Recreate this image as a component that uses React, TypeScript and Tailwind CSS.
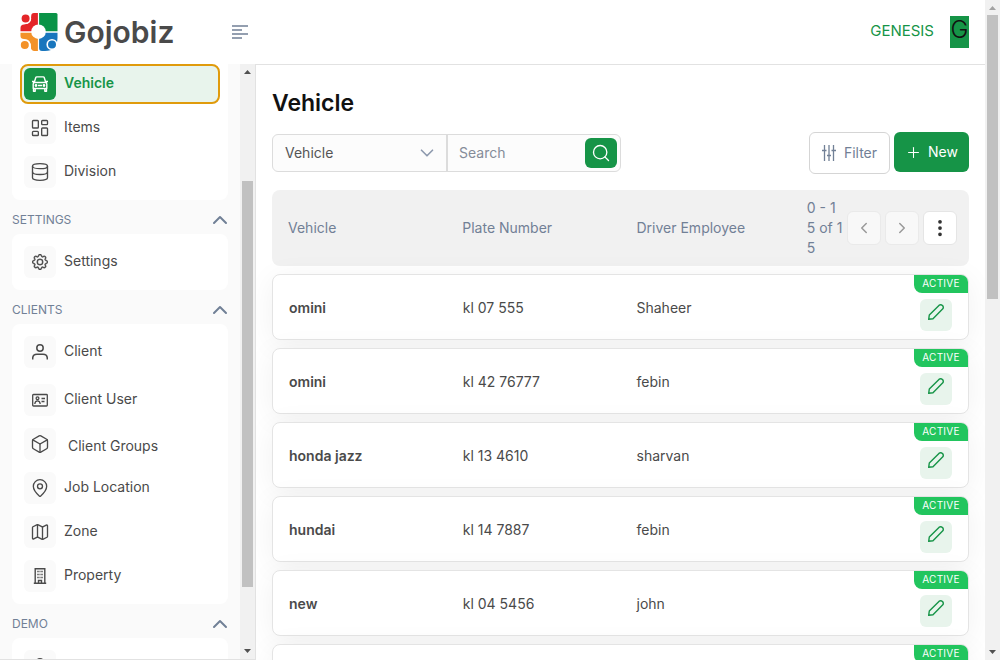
import type { ReactNode } from 'react';
import { Box, ChevronDown, ChevronLeft, ChevronRight, ChevronUp, Database, LayoutDashboard, Map, MapPin, Plus, Search } from 'lucide-react';
import { BsGear, BsThreeDotsVertical } from 'react-icons/bs';

function LogoMark() {
  return (
    <svg viewBox="0 0 38 38" className="size-[38px]" aria-hidden="true">
      <path d="M19 0H36Q37.500 0 37.500 1.500V18.500H19Z" fill="#0a9347" />
      <path d="M.5 18.500V15Q.5 11.500 4 11.500Q11.500 11 11.200 3Q11.200 0 14 0H18V18.500Z" fill="#e42528" />
      <path d="M.5 19.500H18V38H14Q10.500 37 11 34Q11 26 4 26Q.5 26 .5 23Z" fill="#f39229" />
      <path d="M19 19.500H37.500V25Q37 38 25 38H22Q19 38 19 35Z" fill="#1976bd" />
      <g stroke="#fff" strokeWidth="1.600">
        <circle cx="5.600" cy="5.500" r="4.800" fill="#e42528" />
        <circle cx="4.800" cy="32" r="4.800" fill="#f39229" />
        <circle cx="32" cy="31.500" r="4.800" fill="#1976bd" />
      </g>
      <path d="M37.500 26V38H30Q36 36.500 37.500 31" fill="#fff" />
      <path d="M18.500 0V38M0 19H38" stroke="#fff" strokeWidth="1.200" />
      <circle cx="18.500" cy="18.700" r="7.300" fill="#fff" />
    </svg>
  );
}

function CarIcon() {
  return (
    <svg viewBox="0 0 16 16" className="size-4" fill="none" stroke="currentColor" strokeWidth="1.400" strokeLinejoin="round" aria-hidden="true">
      <path d="M2.200 6.500L3.800 1.500Q4 .9 4.800 .9H11.200Q12 .9 12.200 1.500L13.800 6.500M1.200 12.500V8Q1.200 6.500 2.700 6.500H13.300Q14.800 6.500 14.800 8V12.500ZM1.500 12.500V15.300H3.200V12.500M12.800 12.500V15.300H14.500V12.500M0 5.500H2.400M13.600 5.500H16M6 9.500H10" />
      <circle cx="4" cy="9.500" r=".7" fill="currentColor" />
      <circle cx="12" cy="9.500" r=".7" fill="currentColor" />
    </svg>
  );
}

function PersonIcon() {
  return (
    <svg viewBox="0 0 16 16" className="size-4" fill="none" stroke="currentColor" strokeWidth="1.500" aria-hidden="true">
      <circle cx="8" cy="4" r="3.200" />
      <path d="M.7 15.500V14.500Q.7 10.300 5 10.300H11Q15.300 10.300 15.300 14.500V15.500" />
    </svg>
  );
}

function IdCardIcon() {
  return (
    <svg viewBox="0 0 16 16" className="size-4" fill="none" stroke="currentColor" strokeWidth="1.300" aria-hidden="true">
      <rect x=".7" y="2.500" width="14.600" height="11.500" rx=".8" />
      <circle cx="5.500" cy="6.300" r="1.400" />
      <path d="M2.800 12Q3 8.800 5.500 8.800Q8 8.800 8.200 12M9.500 6.500H13M9.500 9.500H12.500" />
    </svg>
  );
}

function BuildingIcon() {
  return (
    <svg viewBox="0 0 16 16" className="size-4" fill="none" stroke="currentColor" aria-hidden="true">
      <path d="M3.200 15.500V.8H12.800V15.500M1.800 15.300H14.200M6.500 15V12.500H9.500V15" strokeWidth="1.400" />
      <path d="M5.300 3.500H6.700M9.300 3.500H10.700M5.300 6.500H6.700M9.300 6.500H10.700M5.300 9.500H6.700M9.300 9.500H10.700M7.500 3.500H8.500M7.500 6.500H8.500M7.500 9.500H8.500" strokeWidth="1.300" />
    </svg>
  );
}

function SlidersIcon() {
  return (
    <svg viewBox="0 0 14 16" className="h-4 w-3.5" fill="none" stroke="currentColor" strokeWidth="1.300" aria-hidden="true">
      <path d="M2.500 0V16M7 0V16M11.500 0V16M0 5.500H4.500M5 10.500H9M9.500 5.500H14" />
    </svg>
  );
}

function PencilIcon() {
  return (
    <svg viewBox="0 0 16 16" className="size-4" fill="none" stroke="currentColor" strokeWidth="1.400" strokeLinejoin="round" aria-hidden="true">
      <path d="M.7 15.300L1.300 11L11.200 1.200Q12.800 .1 14.500 1.500Q15.900 3.200 14.800 4.800L5 14.700Z" />
    </svg>
  );
}

function Scrollbar({ label, children, upTone }: { label: string; children: ReactNode; upTone: string }) {
  return (
    <div aria-label={label} className="flex w-[15px] shrink-0 flex-col items-center bg-[#f1f1f1]">
      <svg viewBox="0 0 15 15" className={`size-[15px] shrink-0 ${upTone}`} fill="currentColor"><path d="M4 10L7.500 6L11 10Z" /></svg>
      <div className="flex min-h-0 w-[11px] flex-1 flex-col">{children}</div>
      <svg viewBox="0 0 15 15" className="size-[15px] shrink-0 text-[#505050]" fill="currentColor"><path d="M4 5L7.500 9L11 5Z" /></svg>
    </div>
  );
}

type Item = { label: string; icon: ReactNode; spacing?: string; text?: string };

const stroke = { size: 20, strokeWidth: 1.6 };

const clients: Item[] = [
  { label: 'Client', icon: <PersonIcon />, spacing: 'mb-1' },
  { label: 'Client User', icon: <IdCardIcon /> },
  { label: 'Client Groups', icon: <Box {...stroke} />, text: 'pl-1 pt-1' },
  { label: 'Job Location', icon: <MapPin {...stroke} /> },
  { label: 'Zone', icon: <Map {...stroke} /> },
  { label: 'Property', icon: <BuildingIcon /> },
];

function NavItem({ label, icon, spacing = '', text = 'pb-0.5' }: Item) {
  return (
    <a href="#" className={`flex items-center gap-2 text-sm text-[#4a4a4a] ${spacing}`}>
      <span className="flex size-8 shrink-0 items-center justify-center rounded-md bg-[#fafafa]">{icon}</span>
      <span className={text}>{label}</span>
    </a>
  );
}

function Section({ title, items }: { title: string; items: Item[] }) {
  return (
    <section>
      <button type="button" className="flex h-[34px] w-full items-center justify-between pt-1.5 text-xs text-[#718096]">
        {title}
        <ChevronUp size={24} strokeWidth={2} className="-mr-1" />
      </button>
      <nav className="flex flex-col gap-3 rounded-lg bg-white p-3">
        {items.map((item, i) => <NavItem key={i} {...item} />)}
      </nav>
    </section>
  );
}

const vehicles = [
  ['omini', 'kl 07 555', 'Shaheer'],
  ['omini', 'kl 42 76777', 'febin'],
  ['honda jazz', 'kl 13 4610', 'sharvan'],
  ['hundai', 'kl 14 7887', 'febin'],
  ['new', 'kl 04 5456', 'john'],
  ['', '', ''],
];

export default function App() {
  return (
    <div className="flex h-screen overflow-hidden bg-white font-['Inter',sans-serif] text-sm text-[#4a4a4a]">
      <div className="flex min-w-0 flex-1 flex-col">
        <header className="flex h-[65px] shrink-0 items-center justify-between border-b border-[#e2e2e2] pr-4 pl-5">
          <div className="flex items-center">
            <a href="#" className="flex items-center gap-1.5 text-3xl font-semibold text-[#4a4a4a]">
              <LogoMark />
              Gojobiz
            </a>
            <button type="button" aria-label="Toggle menu" className="ml-[58px] text-[#718096]">
              <svg viewBox="0 0 16 14" className="h-3.5 w-4" stroke="currentColor" strokeWidth="1.300">
                <path d="M0 1H16M0 5H10M0 9H16M0 13H10" />
              </svg>
            </button>
          </div>
          <div className="flex items-center gap-4">
            <span className="pb-0.5 text-[15px] text-[#169447]">GENESIS</span>
            <button type="button" aria-label="Account" className="flex h-8 w-[19px] justify-center bg-[#169447] text-2xl leading-7 font-light text-[#111]">G</button>
          </div>
        </header>

        <div className="flex min-h-0 flex-1">
          <aside className="-mt-px flex w-64 shrink-0 border-r border-b border-[#e2e2e2] bg-[#fafafa]">
            <div className="min-w-0 flex-1 overflow-hidden px-3">
              <nav className="flex flex-col gap-3 rounded-b-lg bg-white px-3 pb-3">
                <a href="#" aria-current="page" className="-mx-1 -mb-1 flex h-10 shrink-0 items-center gap-2 rounded-lg border-2 border-[#e09b0c] bg-[#e8f4ec] px-0.5 text-sm font-semibold text-[#169447]">
                  <span className="flex size-8 items-center justify-center rounded-md bg-[#169447] text-white"><CarIcon /></span>
                  <span className="pb-0.5">Vehicle</span>
                </a>
                <NavItem label="Items" icon={<LayoutDashboard {...stroke} />} />
                <NavItem label="Division" icon={<Database {...stroke} />} />
              </nav>
              <Section title="SETTINGS" items={[{ label: 'Settings', icon: <BsGear size={16} stroke="currentColor" strokeWidth={0.4} /> }]} />
              <Section title="CLIENTS" items={clients} />
              <Section title="DEMO" items={[{ label: '', icon: <PersonIcon /> }]} />
            </div>
            <Scrollbar label="Sidebar scroll" upTone="text-[#505050]">
              <div className="flex-[102]" />
              <div className="flex-[406] bg-[#c1c1c1]" />
              <div className="flex-[57]" />
            </Scrollbar>
          </aside>

          <main className="min-w-0 flex-1 overflow-hidden px-4 pt-[22px]">
            <h1 className="text-[23px] leading-8 font-semibold text-[#111]">Vehicle</h1>
            <div className="mt-[13px] flex items-start justify-between">
              <form className="mt-0.5 flex h-[38px] w-[349px] rounded-md border border-[#dcdcdc] bg-[#fcfcfc]">
                <div className="relative w-[175px] border-r-2 border-[#dcdcdc]">
                  <select aria-label="Search by" className="h-full w-full appearance-none bg-transparent px-3 text-[#555] outline-none">
                    <option>Vehicle</option>
                  </select>
                  <ChevronDown size={22} strokeWidth={1.8} className="pointer-events-none absolute top-[7px] right-2 text-[#8d99ae]" />
                </div>
                <input type="text" aria-label="Search" placeholder="Search" className="min-w-0 flex-1 bg-transparent pl-[11px] outline-none placeholder:text-[#858c99]" />
                <button type="button" aria-label="Run search" className="m-[3px] flex w-8 items-center justify-center rounded-md bg-[#169447] text-white">
                  <Search size={20} strokeWidth={1.6} />
                </button>
              </form>
              <div className="flex items-start gap-1">
                <button type="button" className="flex h-[42px] w-[81px] items-center justify-center gap-2 rounded-md border border-[#d5d5d5] text-[#718096]">
                  <SlidersIcon />
                  Filter
                </button>
                <button type="button" className="flex h-10 w-[75px] items-center justify-center gap-1.5 rounded-md bg-[#169447] text-white">
                  <Plus size={17} strokeWidth={1.5} />
                  New
                </button>
              </div>
            </div>

            <table className="mt-4 block">
              <thead className="block">
                <tr className="grid h-[76px] grid-cols-4 items-center rounded-lg bg-[#f1f1f1] text-left text-[#718096]">
                  <th className="px-4 font-normal">Vehicle</th>
                  <th className="px-4 font-normal">Plate Number</th>
                  <th className="px-4 font-normal whitespace-nowrap">Driver Employee</th>
                  <th className="flex items-center justify-end gap-1 pr-3 pl-3 font-normal">
                    <span className="mr-0.5 w-0 min-w-0 flex-1 whitespace-nowrap">0 - 1<br />5 of 1<br />5</span>
                    <button type="button" aria-label="Previous page" className="flex size-[34px] items-center justify-center rounded-md border border-[#eaeaea] bg-[#f8f8f8] text-[#999]"><ChevronLeft size={18} /></button>
                    <button type="button" aria-label="Next page" className="flex size-[34px] items-center justify-center rounded-md border border-[#eaeaea] bg-[#f8f8f8] text-[#999]"><ChevronRight size={18} /></button>
                    <button type="button" aria-label="More options" className="flex size-[34px] items-center justify-center rounded-md border border-[#e5e5e5] bg-white text-[#333]"><BsThreeDotsVertical size={20} /></button>
                  </th>
                </tr>
              </thead>
              <tbody className="mt-2 flex flex-col gap-2">
                {vehicles.map(([name, plate, driver], i) => (
                  <tr key={i} className="grid h-[66px] grid-cols-4 items-center rounded-lg border border-[#e4e4e4] bg-white shadow-[0_5px_30px_rgba(0,0,0,0.06)]">
                    <td className="px-4 pt-0.5 font-semibold">{name}</td>
                    <td className="px-4 pt-0.5">{plate}</td>
                    <td className="px-4 pt-0.5">{driver}</td>
                    <td className="flex flex-col items-end gap-1.5 self-start">
                      <span className="flex h-[18px] w-[54px] items-center justify-center rounded-tr-[7px] rounded-bl-lg bg-[#22c55e] pb-0.5 text-[10px] tracking-wide text-white">ACTIVE</span>
                      <button type="button" aria-label={`Edit ${name}`} className="mr-4 flex size-8 items-center justify-center rounded-md bg-[#e8f4ec] pb-1.5 text-[#169447]"><PencilIcon /></button>
                    </td>
                  </tr>
                ))}
              </tbody>
            </table>
          </main>
        </div>
      </div>

      <Scrollbar label="Page scroll" upTone="text-[#a3a3a3]">
        <div className="flex-[284] bg-[#c1c1c1]" />
        <div className="flex-[346]" />
      </Scrollbar>
    </div>
  );
}
